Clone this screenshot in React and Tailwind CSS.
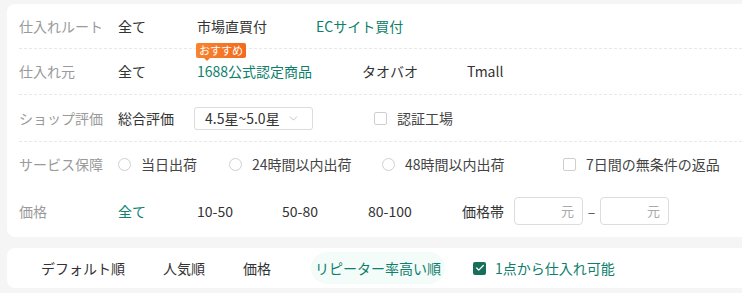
import { Check, ChevronDown } from "lucide-react";

const font = { fontFamily: '"Noto Sans CJK JP", "Noto Sans", sans-serif' };

function Row({ label, children, last, h = "h-[46px]" }) {
    return (
        <div className={`flex items-center ${h} ${last ? "" : "border-b border-dashed border-[#e8e8e8]"}`}>
            <span className="w-[99px] shrink-0 text-[14px] text-[#9a9a9a]">{label}</span>
            <div className="flex items-center">{children}</div>
        </div>
    );
}

function Opt({ w, active, children }) {
    return (
        <span className={`${w} shrink-0 text-[14px] ${active ? "text-[#0e7f6d]" : "text-[#333]"}`}>{children}</span>
    );
}

function Radio({ w, children }) {
    return (
        <label className={`${w} shrink-0 flex items-center gap-[10px] text-[14px] text-[#444]`}>
            <span className="w-[13px] h-[13px] rounded-full border border-[#cfcfcf] bg-white" />
            {children}
        </label>
    );
}

function Box({ children, className = "" }) {
    return (
        <label className={`flex items-center gap-[10px] text-[14px] text-[#444] ${className}`}>
            <span className="w-[13px] h-[13px] rounded-[2px] border border-[#cfcfcf] bg-white" />
            {children}
        </label>
    );
}

export default function App() {
    return (
        <div className="min-h-[293px] bg-[#f5f5f5] pt-[4px] pl-[7px] overflow-hidden" style={font}>
            {/* filter panel */}
            <div className="bg-white rounded-l-[8px] pl-[12px] pb-[1px]">
                <Row label="仕入れルート" h="h-[45px]">
                    <Opt w="w-[79px]">全て</Opt>
                    <Opt w="w-[119px]">市場直買付</Opt>
                    <Opt w="w-[100px]" active>ECサイト買付</Opt>
                </Row>
                <Row label="仕入れ元">
                    <Opt w="w-[79px]">全て</Opt>
                    <span className="relative w-[165px] shrink-0 text-[14px] text-[#0e7f6d]">
                        <span className="absolute left-[-1px] top-[-18px] rounded-[2px] bg-gradient-to-r from-[#f7842f] to-[#f26a1e] px-[3px] text-[11px] leading-[15px] text-white whitespace-nowrap">
                            おすすめ
                            <span className="absolute left-[8px] bottom-[-3px] w-0 h-0 border-l-[3px] border-r-[3px] border-t-[3px] border-l-transparent border-r-transparent border-t-[#f5782a]" />
                        </span>
                        1688公式認定商品
                    </span>
                    <Opt w="w-[105px]">タオバオ</Opt>
                    <Opt w="w-[60px]">Tmall</Opt>
                </Row>
                <Row label="ショップ評価" h="h-[47px]">
                    <Opt w="w-[76px]">総合評価</Opt>
                    <div className="w-[119px] h-[23px] shrink-0 flex items-center justify-between border border-[#dcdcdc] rounded-[3px] pl-[10px] pr-[12px] text-[14px] text-[#333]">
                        4.5星~5.0星
                        <ChevronDown size={13} strokeWidth={1.3} className="text-[#aaa]" />
                    </div>
                    <Box className="ml-[61px]">認証工場</Box>
                </Row>
                <Row label="サービス保障" last h="h-[44px]">
                    <Radio w="w-[111px]">当日出荷</Radio>
                    <Radio w="w-[153px]">24時間以内出荷</Radio>
                    <Radio w="w-[181px]">48時間以内出荷</Radio>
                    <Box>7日間の無条件の返品</Box>
                </Row>
                <Row label="価格" last h="h-[50px]">
                    <Opt w="w-[79px]" active>全て</Opt>
                    <Opt w="w-[85px]">10-50</Opt>
                    <Opt w="w-[86px]">50-80</Opt>
                    <Opt w="w-[94px]">80-100</Opt>
                    <span className="w-[52px] shrink-0 text-[14px] text-[#333]">価格帯</span>
                    <div className="w-[69px] h-[28px] flex items-center justify-end pr-[8px] border border-[#dcdcdc] rounded-[4px] text-[13px] text-[#aaa]">元</div>
                    <span className="w-[17px] text-center text-[14px] text-[#555]">–</span>
                    <div className="w-[69px] h-[28px] flex items-center justify-end pr-[8px] border border-[#dcdcdc] rounded-[4px] text-[13px] text-[#aaa]">元</div>
                </Row>
            </div>

            {/* sort bar */}
            <div className="mt-[11px] h-[40px] bg-white rounded-l-[8px] flex items-center pl-[34px] text-[14px]">
                <span className="w-[122px] text-[#333]">デフォルト順</span>
                <span className="w-[80px] text-[#333]">人気順</span>
                <span className="w-[68px] text-[#333]">価格</span>
                <span className="h-[32px] flex items-center px-[4px] rounded-full bg-[#f3fcf9] text-[#0e7f6d]">リピーター率高い順</span>
                <label className="ml-[28px] flex items-center gap-[9px] text-[#0e7f6d]">
                    <span className="w-[13px] h-[13px] rounded-[2px] bg-[#176e5a] flex items-center justify-center">
                        <Check size={10} strokeWidth={3} className="text-white" />
                    </span>
                    1点から仕入れ可能
                </label>
            </div>
        </div>
    );
}
